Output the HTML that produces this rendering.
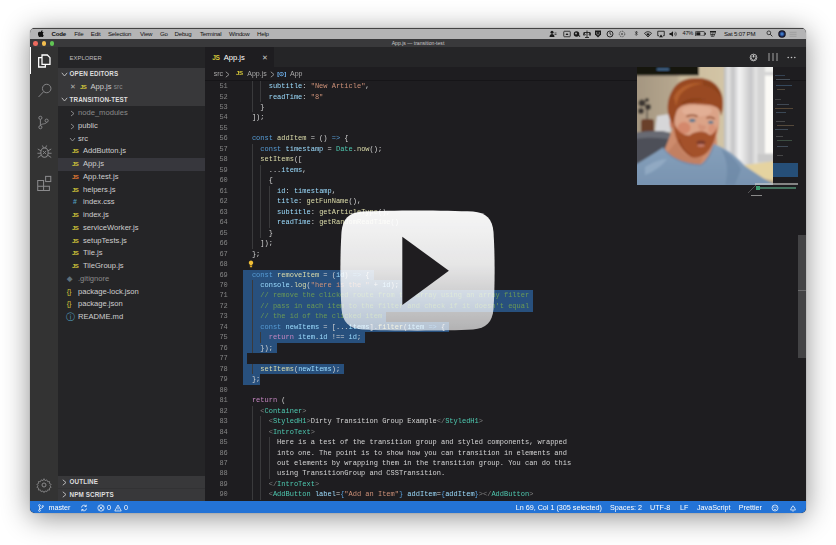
<!DOCTYPE html>
<html lang="en">
<head>
<meta charset="utf-8">
<title>App.js — transition-test</title>
<style>
html,body{margin:0;padding:0;}
body{width:836px;height:545px;background:#fff;overflow:hidden;position:relative;font-family:"Liberation Sans",sans-serif;}
#win{position:absolute;left:30px;top:28px;width:776px;height:485px;border-radius:5px;background:#1e1d20;
 box-shadow:0 4px 28px rgba(0,0,0,.46),0 0 1px rgba(0,0,0,.5);}
#clip{position:absolute;left:0;top:0;width:776px;height:485px;border-radius:5px;overflow:hidden;}
#clip div,#clip svg{position:absolute;}
#blur{left:0;top:0;width:776px;height:485px;filter:blur(0.4px);}
#menubar{left:0;top:0;width:776px;height:10.5px;background:#b4b4b5;border-top:0.7px solid #444;box-sizing:border-box;}
.mi{top:1.1px;font-size:6.1px;line-height:7.5px;color:#111;white-space:nowrap;letter-spacing:-0.2px;}
#titlebar{left:0;top:10.5px;width:776px;height:8.3px;background:#39393b;}
.tlb{width:4.6px;height:4.6px;border-radius:50%;top:2.5px;}
#ttl{left:338px;width:100px;text-align:center;top:1.6px;font-size:5.1px;line-height:6px;color:#c8c8c8;white-space:nowrap;}
#act{left:0;top:18.8px;width:28px;height:454.2px;background:#333333;}
#side{left:28px;top:18.8px;width:147px;height:454.2px;background:#252527;}
#status{left:0;top:473px;width:776px;height:12px;background:#2373d6;}
.st{top:3.1px;font-size:7.2px;line-height:8px;color:#fff;white-space:nowrap;}
#tabs{left:175px;top:18.8px;width:601px;height:20.7px;background:#252527;}
#tab{left:0.3px;top:0;width:68.7px;height:20.7px;background:#1e1d20;}
#crumbs{left:175px;top:39.5px;width:601px;height:13px;background:#1e1d20;border-bottom:0.8px solid #161518;box-sizing:border-box;}
.bc{top:3px;font-size:7px;line-height:8px;color:#a9a9a9;white-space:nowrap;}
.sh{left:28px;width:147px;height:12.6px;background:#38383a;}
.sht{font-size:6.3px;font-weight:bold;line-height:8px;color:#dedede;letter-spacing:0.1px;white-space:nowrap;}
.tl{font-size:7.6px;line-height:12.8px;white-space:nowrap;}
.ti{font-size:6px;font-weight:bold;line-height:12.8px;white-space:nowrap;letter-spacing:-0.55px;}
.trow-sel{left:28px;width:147px;height:12.8px;background:#37373d;}
.ln{left:174px;width:23.8px;text-align:right;font-family:"Liberation Mono",monospace;font-size:7px;line-height:10.47px;color:#858585;height:10.47px;}
.cl{left:213.5px;font-family:"Liberation Mono",monospace;font-size:7.01px;line-height:10.47px;height:10.47px;white-space:pre;color:#d4d4d4;}
.sel{left:213.2px;height:10.6px;background:#28507d;}
.ig{width:0.6px;height:10.47px;background:#3a3a3c;}
</style>
</head>
<body>
<div id="win"><div id="clip"><div id="blur">

<!-- macOS menu bar -->
<div id="menubar">
 <svg style="left:7.8px;top:1.2px" width="6" height="7" viewBox="0 0 12 14"><path d="M8.2 3.2c.6-.8 1-1.800.9-2.900-.9.100-1.900.600-2.600 1.400-.6.700-1.100 1.800-.9 2.800 1 .100 2-.500 2.600-1.300zM9.700 7.500c0-1.800 1.500-2.700 1.600-2.700-.9-1.300-2.200-1.400-2.700-1.500-1.100-.1-2.200.700-2.800.700-.6 0-1.500-.7-2.400-.600C2.100 3.400 1 4.100.4 5.200c-1.300 2.200-.3 5.500.9 7.300.6.900 1.300 1.900 2.300 1.800.9 0 1.300-.6 2.400-.6s1.400.6 2.400.6 1.600-.9 2.200-1.800c.7-1 1-2 1-2.100 0 0-1.900-.7-1.900-2.900z" fill="#111"/></svg>
 <div class="mi" style="left:21.5px;font-weight:bold">Code</div>
 <div class="mi" style="left:44.3px">File</div>
 <div class="mi" style="left:60.8px">Edit</div>
 <div class="mi" style="left:78px">Selection</div>
 <div class="mi" style="left:110px">View</div>
 <div class="mi" style="left:130px">Go</div>
 <div class="mi" style="left:144.5px">Debug</div>
 <div class="mi" style="left:170px">Terminal</div>
 <div class="mi" style="left:199px">Window</div>
 <div class="mi" style="left:227px">Help</div>
 <svg style="left:519.0px;top:0.5px" width="8" height="8" viewBox="0 0 16 16"><circle cx="6" cy="4.5" r="3" fill="#1a1a1a"/><path d="M1 14c0-4 2.500-6 5-6s5 2 5 6z" fill="#1a1a1a"/><path d="M11 6h4M11 9h4" stroke="#1a1a1a" stroke-width="1.3"/></svg>
 <svg style="left:532.5px;top:0.5px" width="8" height="8" viewBox="0 0 16 16"><rect x="1.500" y="2.500" width="13" height="11" rx="1.500" fill="none" stroke="#1a1a1a" stroke-width="1.600"/><path d="M5 10l3-4 3 4z" fill="#1a1a1a"/></svg>
 <svg style="left:542.5px;top:0.5px" width="8" height="8" viewBox="0 0 16 16"><circle cx="7" cy="8" r="5.500" fill="#1a1a1a"/><path d="M9 9l6 3-2 2z" fill="#1a1a1a"/><circle cx="6" cy="7" r="1.800" fill="#b4b4b5"/></svg>
 <svg style="left:552.5px;top:0.5px" width="8" height="8" viewBox="0 0 16 16"><path d="M8 1v14M2 5h12M2 5l-1.500 5h4zM14 5l-2 5h4zM4 15h8" fill="none" stroke="#1a1a1a" stroke-width="1.700"/></svg>
 <svg style="left:564.0px;top:0.5px" width="8" height="8" viewBox="0 0 16 16"><path d="M2 1h12v8l-6 6-6-6z" fill="#1a1a1a"/><path d="M5.500 4v4l2.500 2.500 2.500-2.500V4" fill="none" stroke="#b4b4b5" stroke-width="1.300"/></svg>
 <svg style="left:575.5px;top:0.5px" width="8" height="8" viewBox="0 0 16 16"><circle cx="8" cy="8" r="6" fill="none" stroke="#1a1a1a" stroke-width="1.800"/><path d="M8 4v4l3 2" fill="none" stroke="#1a1a1a" stroke-width="1.600"/></svg>
 <svg style="left:587.5px;top:0.5px" width="8" height="8" viewBox="0 0 16 16"><circle cx="8" cy="8" r="5.500" fill="none" stroke="#1a1a1a" stroke-width="1.400" stroke-dasharray="2 1.600"/><circle cx="8" cy="8" r="1.600" fill="#1a1a1a"/></svg>
 <svg style="left:603.2px;top:1.2px" width="6.5" height="6.5" viewBox="0 0 16 16"><path d="M5 4.500l6 6-3 3V2.500l3 3-6 6" fill="none" stroke="#1a1a1a" stroke-width="1.400"/></svg>
 <svg style="left:614.0px;top:0.5px" width="8" height="8" viewBox="0 0 16 16"><path d="M8 14L1 6.500C5 2.500 11 2.500 15 6.500z" fill="none" stroke="#1a1a1a" stroke-width="1.700"/><path d="M8 12L4.500 8c2-2 5-2 7 0z" fill="#1a1a1a"/></svg>
 <svg style="left:626.5px;top:0.5px" width="8" height="8" viewBox="0 0 16 16"><path d="M4 11.500H1.500v-9h13v9H12" fill="none" stroke="#1a1a1a" stroke-width="1.700"/><path d="M8 9l4 5.500H4z" fill="#1a1a1a"/></svg>
 <svg style="left:639.0px;top:0.5px" width="8" height="8" viewBox="0 0 16 16"><path d="M1 6h3l4-3.500v11L4 10H1z" fill="#1a1a1a"/><path d="M10.500 5.500c1.500 1.500 1.500 3.500 0 5M12.500 3.500c2.700 2.700 2.700 6.300 0 9" fill="none" stroke="#1a1a1a" stroke-width="1.300"/></svg>
 <div class="mi" style="left:652.5px;font-size:5.6px">47%</div>
 <svg style="left:664.5px;top:1.8px" width="11" height="5.500" viewBox="0 0 22 11"><rect x="0.800" y="0.800" width="18" height="9.400" rx="2" fill="none" stroke="#1a1a1a" stroke-width="1.500"/><rect x="2.600" y="2.600" width="8" height="5.800" fill="#1a1a1a"/><rect x="20" y="3.500" width="1.800" height="4" fill="#1a1a1a"/></svg>
 <svg style="left:679.0px;top:0.5px" width="8" height="8" viewBox="0 0 16 16"><rect x="2" y="2" width="12" height="3" fill="#1a1a1a"/><path d="M3 5l2 9M8 5l-1 9M13 5l-4 9M3 9h9" stroke="#1a1a1a" stroke-width="1.300" fill="none"/></svg>
 <div class="mi" style="left:694.0px;font-size:6.1px">Sat 5:07 PM</div>
 <svg style="left:735.5px;top:1.0px" width="7" height="7" viewBox="0 0 16 16"><circle cx="6.500" cy="6.500" r="4.300" fill="none" stroke="#1a1a1a" stroke-width="1.700"/><path d="M9.800 9.800L14.500 14.500" stroke="#1a1a1a" stroke-width="2"/></svg>
 <svg style="left:747.5px;top:0.5px" width="8" height="8" viewBox="0 0 16 16"><defs><radialGradient id="siri"><stop offset="0" stop-color="#4f9be0"/><stop offset="0.450" stop-color="#2a4f98"/><stop offset="0.800" stop-color="#15152a"/><stop offset="1" stop-color="#101018"/></radialGradient></defs><circle cx="8" cy="8" r="7.500" fill="url(#siri)"/></svg>
 <svg style="left:759.0px;top:0.5px" width="8" height="8" viewBox="0 0 16 16"><path d="M1 4.500h14M1 8.500h14M1 12.500h14" stroke="#8c8c8c" stroke-width="1.100"/></svg>
</div>

<!-- VS Code title bar -->
<div id="titlebar">
 <div class="tlb" style="left:3.2px;background:#ec6a5e"></div>
 <div class="tlb" style="left:11.5px;background:#f4bf4f"></div>
 <div class="tlb" style="left:19.7px;background:#61c554"></div>
 <div id="ttl">App.js — transition-test</div>
</div>

<!-- activity bar -->
<div id="act">
 <div style="left:0;top:0.700px;width:1.200px;height:27px;background:#fff"></div>
 <svg style="left:5.6px;top:6.4px" width="16" height="16" viewBox="0 0 24 24" fill="none" stroke="#ffffff" stroke-width="1.500"><path d="M9 3h8l4 4v10h-12z" stroke-width="1.900"/><path d="M9 7H4v14h10v-4" stroke-width="1.900"/></svg>
 <svg style="left:6.5px;top:36.2px" width="15" height="15" viewBox="0 0 24 24" fill="none" stroke="#8a8a8c" stroke-width="1.500"><circle cx="15.500" cy="8.800" r="6.800"/><path d="M10.800 13.600L2.500 22.300"/></svg>
 <svg style="left:5.8px;top:67.9px" width="15" height="15" viewBox="0 0 24 24" fill="none" stroke="#8a8a8c" stroke-width="1.500"><circle cx="7" cy="4.500" r="2.500"/><circle cx="7" cy="19.500" r="2.500"/><circle cx="17" cy="9" r="2.500"/><path d="M7 7v10M17 11.500c0 3.500-10 2-10 5.500"/></svg>
 <svg style="left:5.6px;top:96.3px" width="17" height="17" viewBox="0 0 24 24" fill="none" stroke="#8a8a8c" stroke-width="1.500"><ellipse cx="12" cy="13.500" rx="5.200" ry="6.600"/><path d="M9.700 11.200l4.600 4.600M14.300 11.200l-4.600 4.600M9 3.500l1.600 3.400M15 3.500l-1.600 3.400M2.500 8.500L7 11M2 14.500h4.800M2.500 20.500L7 17.500M21.500 8.500L17 11M22 14.500h-4.800M21.500 20.500L17 17.500" stroke-width="1.300"/></svg>
 <svg style="left:5.8px;top:128.2px" width="16.5" height="16.5" viewBox="0 0 24 24" fill="none" stroke="#8a8a8c" stroke-width="1.500"><path d="M2.500 8h8.500v8.500h8.500v6H2.500zM11 16.500H2.500M11 16.500v6"/><rect x="14" y="2" width="7.500" height="7.500"/></svg>
 <svg style="left:5.8px;top:430.4px" width="16" height="16" viewBox="0 0 24 24" fill="none" stroke="#8a8a8c" stroke-width="1.500"><circle cx="12" cy="12" r="3"/><path d="M12 2.500l1.500 3 2.700-1.200 1.200 2.800 3-.3-.3 3 2.700 1.200-2 2.200 2 2.200-2.700 1.200.3 3-3-.3-1.200 2.800-2.700-1.200-1.500 2.600-1.500-2.600-2.700 1.200-1.200-2.800-3 .3.300-3-2.700-1.200 2-2.200-2-2.200 2.700-1.200-.3-3 3 .3 1.200-2.800 2.700 1.200z" stroke-width="1.200"/></svg>
</div>

<!-- sidebar -->
<div id="side"></div>
<div class="sht" style="left:39.6px;top:25.8px;font-weight:normal;color:#bdbdbd;letter-spacing:0;font-size:5.9px">EXPLORER</div>
<div class="sh" style="top:39.6px;height:38.4px"></div>
<svg style="left:31.0px;top:43.8px" width="7" height="5" viewBox="0 0 7 5"><path d="M0.800 0.800L3.500 4 6.200 0.800" fill="none" stroke="#c5c5c5" stroke-width="0.900"/></svg>
<div class="sht" style="left:39.6px;top:42.0px">OPEN EDITORS</div>
<div class="tl" style="left:40.0px;top:53.2px;color:#b0b0b0;font-size:7px">&#x2715;</div>
<div class="ti" style="left:50.0px;top:53.2px;color:#d4c63a">JS</div>
<div class="tl" style="left:60.5px;top:53.2px;color:#cfcfcf">App.js <span style="color:#8c8c8c;font-size:6.5px">src</span></div>
<svg style="left:31.0px;top:69.3px" width="7" height="5" viewBox="0 0 7 5"><path d="M0.800 0.800L3.500 4 6.200 0.800" fill="none" stroke="#c5c5c5" stroke-width="0.900"/></svg>
<div class="sht" style="left:39.6px;top:67.6px">TRANSITION-TEST</div>
<svg class="chev" style="top:82.00px;left:40.00px" width="5" height="7" viewBox="0 0 5 7"><path d="M1 1 L4 3.5 L1 6" fill="none" stroke="#a0a0a0" stroke-width="0.8"/></svg>
<div class="tl" style="top:79.00px;left:48.00px;color:#8a8a8a">node_modules</div>
<svg class="chev" style="top:94.70px;left:40.00px" width="5" height="7" viewBox="0 0 5 7"><path d="M1 1 L4 3.5 L1 6" fill="none" stroke="#a0a0a0" stroke-width="0.8"/></svg>
<div class="tl" style="top:91.70px;left:48.00px;color:#cfcfcf">public</div>
<svg class="chev" style="top:108.50px;left:39.00px" width="7" height="5" viewBox="0 0 7 5"><path d="M1 1 L3.5 4 L6 1" fill="none" stroke="#a0a0a0" stroke-width="0.8"/></svg>
<div class="tl" style="top:104.50px;left:48.00px;color:#cfcfcf">src</div>
<div class="ti" style="top:117.20px;left:42.00px;color:#d4c63a;">JS</div>
<div class="tl" style="top:117.20px;left:53.00px;color:#cfcfcf">AddButton.js</div>
<div class="trow-sel" style="top:130.00px"></div>
<div class="ti" style="top:130.00px;left:42.00px;color:#d4c63a;">JS</div>
<div class="tl" style="top:130.00px;left:53.00px;color:#cfcfcf">App.js</div>
<div class="ti" style="top:142.70px;left:42.00px;color:#e37933;">JS</div>
<div class="tl" style="top:142.70px;left:53.00px;color:#cfcfcf">App.test.js</div>
<div class="ti" style="top:155.50px;left:42.00px;color:#d4c63a;">JS</div>
<div class="tl" style="top:155.50px;left:53.00px;color:#cfcfcf">helpers.js</div>
<div class="ti" style="top:168.30px;left:42.00px;color:#519aba;font-size:7px;margin-left:1px;">#</div>
<div class="tl" style="top:168.30px;left:53.00px;color:#cfcfcf">index.css</div>
<div class="ti" style="top:181.00px;left:42.00px;color:#d4c63a;">JS</div>
<div class="tl" style="top:181.00px;left:53.00px;color:#cfcfcf">index.js</div>
<div class="ti" style="top:193.80px;left:42.00px;color:#d4c63a;">JS</div>
<div class="tl" style="top:193.80px;left:53.00px;color:#cfcfcf">serviceWorker.js</div>
<div class="ti" style="top:206.50px;left:42.00px;color:#d4c63a;">JS</div>
<div class="tl" style="top:206.50px;left:53.00px;color:#cfcfcf">setupTests.js</div>
<div class="ti" style="top:219.30px;left:42.00px;color:#d4c63a;">JS</div>
<div class="tl" style="top:219.30px;left:53.00px;color:#cfcfcf">Tile.js</div>
<div class="ti" style="top:232.10px;left:42.00px;color:#d4c63a;">JS</div>
<div class="tl" style="top:232.10px;left:53.00px;color:#cfcfcf">TileGroup.js</div>
<div class="ti" style="top:244.80px;left:37.00px;color:#5d6f7a;font-size:7px;margin-left:0.3px;">&#x25C6;</div>
<div class="tl" style="top:244.80px;left:48.00px;color:#8a8a8a">.gitignore</div>
<div class="ti" style="top:257.60px;left:37.00px;color:#d4c63a;font-size:7.2px;font-weight:normal;margin-left:-0.3px;letter-spacing:0;">{}</div>
<div class="tl" style="top:257.60px;left:48.00px;color:#cfcfcf">package-lock.json</div>
<div class="ti" style="top:270.30px;left:37.00px;color:#d4c63a;font-size:7.2px;font-weight:normal;margin-left:-0.3px;letter-spacing:0;">{}</div>
<div class="tl" style="top:270.30px;left:48.00px;color:#cfcfcf">package.json</div>
<div class="ti" style="top:283.10px;left:37.00px;color:#519aba;font-size:8.5px;font-weight:normal;margin-left:-1.2px;">&#x24D8;</div>
<div class="tl" style="top:283.10px;left:48.00px;color:#cfcfcf">README.md</div>
<div class="sh" style="top:448px;height:25px"></div>
<svg style="left:32.0px;top:450.7px" width="5" height="7" viewBox="0 0 5 7"><path d="M0.800 0.800L4 3.500 0.800 6.200" fill="none" stroke="#c5c5c5" stroke-width="0.900"/></svg>
<div class="sht" style="left:39.6px;top:450.2px">OUTLINE</div>
<svg style="left:32.0px;top:463.4px" width="5" height="7" viewBox="0 0 5 7"><path d="M0.800 0.800L4 3.500 0.800 6.200" fill="none" stroke="#c5c5c5" stroke-width="0.900"/></svg>
<div class="sht" style="left:39.6px;top:462.9px">NPM SCRIPTS</div>
<div style="left:28px;top:460.300px;width:147px;height:0.600px;background:#323234"></div>

<!-- editor -->
<div id="tabs"><div id="tab"></div></div>
<div class="ti" style="left:182.3px;top:23.6px;color:#d4c63a;font-size:6.6px">JS</div>
<div class="tl" style="left:193.7px;top:23.6px;color:#ffffff">App.js</div>
<div class="tl" style="left:232.0px;top:23.6px;color:#c8c8c8;font-size:6.5px">&#x2715;</div>
<svg style="left:718.8px;top:24.5px" width="9" height="9" viewBox="0 0 16 16" fill="none" stroke="#c5c5c5" stroke-width="1.500"><circle cx="8" cy="8" r="6"/><path d="M8 3v5" stroke-width="2.400"/><path d="M5.500 5.500a4 4 0 1 0 5 0"/></svg>
<svg style="left:737.5px;top:25.0px" width="10" height="8" viewBox="0 0 10 8" stroke="#b0b0b0" stroke-width="0.900"><path d="M1 0v8M5 0v8M9 0v8"/></svg>
<svg style="left:756.5px;top:27.8px" width="9" height="3" viewBox="0 0 9 3" fill="#c5c5c5"><circle cx="1.200" cy="1.500" r="0.800"/><circle cx="4.500" cy="1.500" r="0.800"/><circle cx="7.800" cy="1.500" r="0.800"/></svg>
<div id="crumbs"></div>
<div class="bc" style="left:183.7px;top:41.8px">src</div>
<svg style="left:195.0px;top:42.5px" width="5" height="7" viewBox="0 0 5 7"><path d="M0.800 0.800L4 3.500 0.800 6.200" fill="none" stroke="#9a9a9a" stroke-width="0.900"/></svg>
<div class="ti" style="left:206.0px;top:39.4px;color:#d4c63a;font-size:6.2px">JS</div>
<div class="bc" style="left:217.3px;top:41.8px">App.js</div>
<svg style="left:240.0px;top:42.5px" width="5" height="7" viewBox="0 0 5 7"><path d="M0.800 0.800L4 3.500 0.800 6.200" fill="none" stroke="#9a9a9a" stroke-width="0.900"/></svg>
<div class="bc" style="left:247.3px;top:41.8px;color:#75beff;font-size:6px;font-weight:bold">[&#x2299;]</div>
<div class="bc" style="left:260.0px;top:41.8px">App</div>
<div class="sel" style="top:241.52px;width:130.41px"></div>
<div class="sel" style="top:252.00px;width:159.85px"></div>
<div class="sel" style="top:262.47px;width:290.26px"></div>
<div class="sel" style="top:272.94px;width:290.26px"></div>
<div class="sel" style="top:283.40px;width:143.03px"></div>
<div class="sel" style="top:293.88px;width:206.13px"></div>
<div class="sel" style="top:304.35px;width:121.99px"></div>
<div class="sel" style="top:314.81px;width:33.65px"></div>
<div class="sel" style="top:325.29px;width:4.21px"></div>
<div class="sel" style="top:335.75px;width:100.96px"></div>
<div class="sel" style="top:346.23px;width:16.83px"></div>
<div class="ig" style="top:53.06px;left:221.91px"></div>
<div class="ig" style="top:53.06px;left:230.33px"></div>
<div class="ig" style="top:63.53px;left:221.91px"></div>
<div class="ig" style="top:63.53px;left:230.33px"></div>
<div class="ig" style="top:74.00px;left:221.91px"></div>
<div class="ig" style="top:115.88px;left:221.91px"></div>
<div class="ig" style="top:126.36px;left:221.91px"></div>
<div class="ig" style="top:136.82px;left:221.91px"></div>
<div class="ig" style="top:136.82px;left:230.33px"></div>
<div class="ig" style="top:147.30px;left:221.91px"></div>
<div class="ig" style="top:147.30px;left:230.33px"></div>
<div class="ig" style="top:157.76px;left:221.91px"></div>
<div class="ig" style="top:157.76px;left:230.33px"></div>
<div class="ig" style="top:157.76px;left:238.74px"></div>
<div class="ig" style="top:168.24px;left:221.91px"></div>
<div class="ig" style="top:168.24px;left:230.33px"></div>
<div class="ig" style="top:168.24px;left:238.74px"></div>
<div class="ig" style="top:178.71px;left:221.91px"></div>
<div class="ig" style="top:178.71px;left:230.33px"></div>
<div class="ig" style="top:178.71px;left:238.74px"></div>
<div class="ig" style="top:189.18px;left:221.91px"></div>
<div class="ig" style="top:189.18px;left:230.33px"></div>
<div class="ig" style="top:189.18px;left:238.74px"></div>
<div class="ig" style="top:199.65px;left:221.91px"></div>
<div class="ig" style="top:199.65px;left:230.33px"></div>
<div class="ig" style="top:210.12px;left:221.91px"></div>
<div class="ig" style="top:252.00px;left:221.91px"></div>
<div class="ig" style="top:262.47px;left:221.91px"></div>
<div class="ig" style="top:272.94px;left:221.91px"></div>
<div class="ig" style="top:283.40px;left:221.91px"></div>
<div class="ig" style="top:293.88px;left:221.91px"></div>
<div class="ig" style="top:304.35px;left:221.91px"></div>
<div class="ig" style="top:304.35px;left:230.33px"></div>
<div class="ig" style="top:314.81px;left:221.91px"></div>
<div class="ig" style="top:335.75px;left:221.91px"></div>
<div class="ig" style="top:377.63px;left:221.91px"></div>
<div class="ig" style="top:388.11px;left:221.91px"></div>
<div class="ig" style="top:388.11px;left:230.33px"></div>
<div class="ig" style="top:398.58px;left:221.91px"></div>
<div class="ig" style="top:398.58px;left:230.33px"></div>
<div class="ig" style="top:409.05px;left:221.91px"></div>
<div class="ig" style="top:409.05px;left:230.33px"></div>
<div class="ig" style="top:409.05px;left:238.74px"></div>
<div class="ig" style="top:419.52px;left:221.91px"></div>
<div class="ig" style="top:419.52px;left:230.33px"></div>
<div class="ig" style="top:419.52px;left:238.74px"></div>
<div class="ig" style="top:429.99px;left:221.91px"></div>
<div class="ig" style="top:429.99px;left:230.33px"></div>
<div class="ig" style="top:429.99px;left:238.74px"></div>
<div class="ig" style="top:440.46px;left:221.91px"></div>
<div class="ig" style="top:440.46px;left:230.33px"></div>
<div class="ig" style="top:440.46px;left:238.74px"></div>
<div class="ig" style="top:450.93px;left:221.91px"></div>
<div class="ig" style="top:450.93px;left:230.33px"></div>
<div class="ig" style="top:461.40px;left:221.91px"></div>
<div class="ig" style="top:461.40px;left:230.33px"></div>
<div class="ln" style="top:53.06px">51</div>
<div class="cl" style="top:53.06px"><span style="color:#9cdcfe">      subtitle</span><span style="color:#d4d4d4">: </span><span style="color:#ce9178">"New Article"</span><span style="color:#d4d4d4">,</span></div>
<div class="ln" style="top:63.53px">52</div>
<div class="cl" style="top:63.53px"><span style="color:#9cdcfe">      readTime</span><span style="color:#d4d4d4">: </span><span style="color:#ce9178">"8"</span></div>
<div class="ln" style="top:74.00px">53</div>
<div class="cl" style="top:74.00px"><span style="color:#d4d4d4">    }</span></div>
<div class="ln" style="top:84.47px">54</div>
<div class="cl" style="top:84.47px"><span style="color:#d4d4d4">  ]);</span></div>
<div class="ln" style="top:94.94px">55</div>
<div class="ln" style="top:105.41px">56</div>
<div class="cl" style="top:105.41px"><span style="color:#569cd6">  const </span><span style="color:#dcdcaa">addItem</span><span style="color:#d4d4d4"> = () </span><span style="color:#569cd6">=&gt;</span><span style="color:#d4d4d4"> {</span></div>
<div class="ln" style="top:115.88px">57</div>
<div class="cl" style="top:115.88px"><span style="color:#569cd6">    const </span><span style="color:#9cdcfe">timestamp</span><span style="color:#d4d4d4"> = </span><span style="color:#4ec9b0">Date</span><span style="color:#d4d4d4">.</span><span style="color:#dcdcaa">now</span><span style="color:#d4d4d4">();</span></div>
<div class="ln" style="top:126.36px">58</div>
<div class="cl" style="top:126.36px"><span style="color:#dcdcaa">    setItems</span><span style="color:#d4d4d4">([</span></div>
<div class="ln" style="top:136.82px">59</div>
<div class="cl" style="top:136.82px"><span style="color:#d4d4d4">      ...</span><span style="color:#9cdcfe">items</span><span style="color:#d4d4d4">,</span></div>
<div class="ln" style="top:147.30px">60</div>
<div class="cl" style="top:147.30px"><span style="color:#d4d4d4">      {</span></div>
<div class="ln" style="top:157.76px">61</div>
<div class="cl" style="top:157.76px"><span style="color:#9cdcfe">        id</span><span style="color:#d4d4d4">: </span><span style="color:#9cdcfe">timestamp</span><span style="color:#d4d4d4">,</span></div>
<div class="ln" style="top:168.24px">62</div>
<div class="cl" style="top:168.24px"><span style="color:#9cdcfe">        title</span><span style="color:#d4d4d4">: </span><span style="color:#dcdcaa">getFunName</span><span style="color:#d4d4d4">(),</span></div>
<div class="ln" style="top:178.71px">63</div>
<div class="cl" style="top:178.71px"><span style="color:#9cdcfe">        subtitle</span><span style="color:#d4d4d4">: </span><span style="color:#dcdcaa">getArticleType</span><span style="color:#d4d4d4">(),</span></div>
<div class="ln" style="top:189.18px">64</div>
<div class="cl" style="top:189.18px"><span style="color:#9cdcfe">        readTime</span><span style="color:#d4d4d4">: </span><span style="color:#dcdcaa">getRandomReadTime</span><span style="color:#d4d4d4">()</span></div>
<div class="ln" style="top:199.65px">65</div>
<div class="cl" style="top:199.65px"><span style="color:#d4d4d4">      }</span></div>
<div class="ln" style="top:210.12px">66</div>
<div class="cl" style="top:210.12px"><span style="color:#d4d4d4">    ]);</span></div>
<div class="ln" style="top:220.59px">67</div>
<div class="cl" style="top:220.59px"><span style="color:#d4d4d4">  };</span></div>
<div class="ln" style="top:231.06px">68</div>
<div class="ln" style="top:241.52px">69</div>
<div class="cl" style="top:241.52px"><span style="color:#569cd6">  const </span><span style="color:#dcdcaa">removeItem</span><span style="color:#d4d4d4"> = (</span><span style="color:#9cdcfe">id</span><span style="color:#d4d4d4">) </span><span style="color:#569cd6">=&gt;</span><span style="color:#d4d4d4"> {</span></div>
<div class="ln" style="top:252.00px">70</div>
<div class="cl" style="top:252.00px"><span style="color:#9cdcfe">    console</span><span style="color:#d4d4d4">.</span><span style="color:#dcdcaa">log</span><span style="color:#d4d4d4">(</span><span style="color:#ce9178">"here is the "</span><span style="color:#d4d4d4"> + </span><span style="color:#9cdcfe">id</span><span style="color:#d4d4d4">);</span></div>
<div class="ln" style="top:262.47px">71</div>
<div class="cl" style="top:262.47px"><span style="color:#6a9955">    // remove the clicked route from the array using an array filter</span></div>
<div class="ln" style="top:272.94px">72</div>
<div class="cl" style="top:272.94px"><span style="color:#6a9955">    // pass in each item to the filter and check if it doesn't equal</span></div>
<div class="ln" style="top:283.40px">73</div>
<div class="cl" style="top:283.40px"><span style="color:#6a9955">    // the id of the clicked item</span></div>
<div class="ln" style="top:293.88px">74</div>
<div class="cl" style="top:293.88px"><span style="color:#569cd6">    const </span><span style="color:#9cdcfe">newItems</span><span style="color:#d4d4d4"> = [...</span><span style="color:#9cdcfe">items</span><span style="color:#d4d4d4">].</span><span style="color:#dcdcaa">filter</span><span style="color:#d4d4d4">(</span><span style="color:#9cdcfe">item</span><span style="color:#d4d4d4"> </span><span style="color:#569cd6">=&gt;</span><span style="color:#d4d4d4"> {</span></div>
<div class="ln" style="top:304.35px">75</div>
<div class="cl" style="top:304.35px"><span style="color:#c586c0">      return </span><span style="color:#9cdcfe">item</span><span style="color:#d4d4d4">.</span><span style="color:#9cdcfe">id</span><span style="color:#d4d4d4"> !== </span><span style="color:#9cdcfe">id</span><span style="color:#d4d4d4">;</span></div>
<div class="ln" style="top:314.81px">76</div>
<div class="cl" style="top:314.81px"><span style="color:#d4d4d4">    });</span></div>
<div class="ln" style="top:325.29px">77</div>
<div class="ln" style="top:335.75px">78</div>
<div class="cl" style="top:335.75px"><span style="color:#dcdcaa">    setItems</span><span style="color:#d4d4d4">(</span><span style="color:#9cdcfe">newItems</span><span style="color:#d4d4d4">);</span></div>
<div class="ln" style="top:346.23px">79</div>
<div class="cl" style="top:346.23px"><span style="color:#d4d4d4">  };</span></div>
<div class="ln" style="top:356.69px">80</div>
<div class="ln" style="top:367.17px">81</div>
<div class="cl" style="top:367.17px"><span style="color:#c586c0">  return </span><span style="color:#d4d4d4">(</span></div>
<div class="ln" style="top:377.63px">82</div>
<div class="cl" style="top:377.63px"><span style="color:#808080">    &lt;</span><span style="color:#4ec9b0">Container</span><span style="color:#808080">&gt;</span></div>
<div class="ln" style="top:388.11px">83</div>
<div class="cl" style="top:388.11px"><span style="color:#808080">      &lt;</span><span style="color:#4ec9b0">StyledH1</span><span style="color:#808080">&gt;</span><span style="color:#d4d4d4">Dirty Transition Group Example</span><span style="color:#808080">&lt;/</span><span style="color:#4ec9b0">StyledH1</span><span style="color:#808080">&gt;</span></div>
<div class="ln" style="top:398.58px">84</div>
<div class="cl" style="top:398.58px"><span style="color:#808080">      &lt;</span><span style="color:#4ec9b0">IntroText</span><span style="color:#808080">&gt;</span></div>
<div class="ln" style="top:409.05px">85</div>
<div class="cl" style="top:409.05px"><span style="color:#d4d4d4">        Here is a test of the transition group and styled components, wrapped</span></div>
<div class="ln" style="top:419.52px">86</div>
<div class="cl" style="top:419.52px"><span style="color:#d4d4d4">        into one. The point is to show how you can transition in elements and</span></div>
<div class="ln" style="top:429.99px">87</div>
<div class="cl" style="top:429.99px"><span style="color:#d4d4d4">        out elements by wrapping them in the transition group. You can do this</span></div>
<div class="ln" style="top:440.46px">88</div>
<div class="cl" style="top:440.46px"><span style="color:#d4d4d4">        using TransitionGroup and CSSTransition.</span></div>
<div class="ln" style="top:450.93px">89</div>
<div class="cl" style="top:450.93px"><span style="color:#808080">      &lt;/</span><span style="color:#4ec9b0">IntroText</span><span style="color:#808080">&gt;</span></div>
<div class="ln" style="top:461.40px">90</div>
<div class="cl" style="top:461.40px"><span style="color:#808080">      &lt;</span><span style="color:#4ec9b0">AddButton</span><span style="color:#d4d4d4"> </span><span style="color:#9cdcfe">label</span><span style="color:#d4d4d4">=</span><span style="color:#569cd6">{</span><span style="color:#ce9178">"Add an Item"</span><span style="color:#569cd6">}</span><span style="color:#d4d4d4"> </span><span style="color:#9cdcfe">addItem</span><span style="color:#d4d4d4">=</span><span style="color:#569cd6">{</span><span style="color:#9cdcfe">addItem</span><span style="color:#569cd6">}</span><span style="color:#808080">&gt;&lt;/</span><span style="color:#4ec9b0">AddButton</span><span style="color:#808080">&gt;</span></div>
<div style="left:743px;top:135px;width:24.500px;height:14px;background:#264f78"></div>
<div style="left:745.0px;top:47.0px;width:10px;height:0.900px;background:#5b7fa6;opacity:.38"></div>
<div style="left:746.0px;top:51.0px;width:14px;height:0.900px;background:#8aa0b8;opacity:.38"></div>
<div style="left:746.0px;top:57.0px;width:16px;height:0.900px;background:#5b8fc0;opacity:.38"></div>
<div style="left:747.0px;top:61.0px;width:8px;height:0.900px;background:#9b8a6a;opacity:.38"></div>
<div style="left:745.0px;top:71.0px;width:6px;height:0.900px;background:#777;opacity:.38"></div>
<div style="left:747.0px;top:76.0px;width:12px;height:0.900px;background:#7a8fa8;opacity:.38"></div>
<div style="left:745.0px;top:80.0px;width:18px;height:0.900px;background:#b08a5a;opacity:.38"></div>
<div style="left:746.0px;top:84.0px;width:10px;height:0.900px;background:#6c8fb0;opacity:.38"></div>
<div style="left:746.0px;top:93.0px;width:9px;height:0.900px;background:#888;opacity:.38"></div>
<div style="left:747.0px;top:97.0px;width:17px;height:0.900px;background:#b0906a;opacity:.38"></div>
<div style="left:745.0px;top:101.0px;width:13px;height:0.900px;background:#7a94b0;opacity:.38"></div>
<div style="left:746.0px;top:108.0px;width:7px;height:0.900px;background:#8a8a8a;opacity:.38"></div>
<div style="left:747.0px;top:112.0px;width:15px;height:0.900px;background:#6f9a7a;opacity:.38"></div>
<div style="left:747.0px;top:118.0px;width:11px;height:0.900px;background:#7a94b0;opacity:.38"></div>
<div style="left:747.0px;top:127.0px;width:6px;height:0.900px;background:#888;opacity:.38"></div>
<div style="left:767.600px;top:207px;width:8.400px;height:123px;background:#434345"></div>
<div style="left:767.600px;top:262.200px;width:8.400px;height:1px;background:#6a6a6c"></div>
<svg style="left:217.500px;top:231.500px" width="6" height="8" viewBox="0 0 12 16"><path d="M6 1a4.500 4.500 0 0 0-2.500 8.200V11h5V9.200A4.500 4.500 0 0 0 6 1z" fill="#f2c037"/><rect x="3.800" y="12" width="4.400" height="2.500" fill="#d9a520"/></svg>
<svg style="left:607px;top:39px" width="136" height="118" viewBox="0 0 136 118">
<defs>
 <filter id="bl" x="-5%" y="-5%" width="110%" height="110%"><feGaussianBlur stdDeviation="0.800"/></filter>
 <filter id="bl2" x="-10%" y="-10%" width="120%" height="120%"><feGaussianBlur stdDeviation="1.600"/></filter>
 <linearGradient id="wall" x1="0" x2="1" y1="0" y2="0"><stop offset="0" stop-color="#a39580"/><stop offset="0.450" stop-color="#b7a88f"/><stop offset="0.500" stop-color="#cbbc9d"/><stop offset="1" stop-color="#d3c5a6"/></linearGradient>
 <linearGradient id="curt" x1="0" x2="1" y1="0" y2="0"><stop offset="0" stop-color="#b9b9b9"/><stop offset="0.120" stop-color="#e4e4e4"/><stop offset="0.250" stop-color="#c2c2c4"/><stop offset="0.420" stop-color="#f4f4f4"/><stop offset="0.600" stop-color="#dcdcdc"/><stop offset="0.750" stop-color="#c6c6c8"/><stop offset="0.900" stop-color="#e6e6e6"/><stop offset="1" stop-color="#cfcfcf"/></linearGradient>
 <linearGradient id="shirt" x1="0" x2="0" y1="0" y2="1"><stop offset="0" stop-color="#86a0bb"/><stop offset="1" stop-color="#7893b0"/></linearGradient>
 <clipPath id="camclip"><rect x="0" y="0" width="136" height="118"/></clipPath>
</defs>
<g clip-path="url(#camclip)">
<rect x="0" y="0" width="136" height="118" fill="#b3a48c"/>
<g filter="url(#bl)">
 <rect x="-2" y="-2" width="92" height="104" fill="url(#wall)"/>
 <rect x="-2" y="-2" width="64" height="10.500" fill="#15120f"/>
 <rect x="20" y="1.500" width="12" height="1.600" fill="#4f7fb0"/>
 <rect x="87" y="-2" width="36" height="104" fill="url(#curt)"/>
 <rect x="120.500" y="-2" width="17" height="100" fill="#d4d4d4"/>
 <rect x="128" y="8.500" width="10" height="78" fill="#fbfaf6"/>
 <rect x="128" y="-2" width="10" height="7" fill="#f1f1ee"/>
 <rect x="120.500" y="87" width="17" height="8" fill="#c9c9c9"/>
 <path d="M100 99L138 94V114L118 110z" fill="#e5d3a0"/>
 <!-- plant -->
 <g fill="#3d3833"><circle cx="5" cy="36" r="3.500"/><circle cx="11" cy="40" r="3"/><circle cx="4" cy="44" r="3"/><circle cx="10" cy="33" r="2"/><rect x="9.600" y="40" width="1" height="14"/></g>
 <rect x="4" y="52" width="13" height="14" rx="3" fill="#6b4129"/>
 <path d="M20 49l12-2 2 18H18z" fill="#d6d6d8"/>
 <!-- couch -->
 <path d="M-2 66C10 64 26 63 32 66C38 70 40 76 40 84V104H-2z" fill="#4e5059"/>
 <path d="M-2 66C10 64 26 63 32 66C36 68 38 71 39 74C28 70 10 70 -2 72z" fill="#686a73"/>
 <!-- neck (behind shirt) -->
 <path d="M37 58L31 74L27 84L44 102H68L80 78V58z" fill="#cd8c6d"/>
 <path d="M40 74C44 88 54 93 66 90L62 100H44L30 86z" fill="#b97759" opacity="0.550"/>
 <!-- shirt -->
 <path d="M-2 98C8 92 18 86 26 80.500C32 90 46 98 64 98C70 94 74 88 77 77L84 80C94 85 102 92 108 99L126 111L140 120H-2z" fill="url(#shirt)"/>
 <path d="M84 82C94 87 100 94 104 102L98 118H88C92 104 90 92 84 82z" fill="#6c87a5" opacity="0.700"/>
 <path d="M8 100C16 95 24 92 30 92C26 98 18 104 8 108z" fill="#9db4cb" opacity="0.600"/>
 <path d="M26 80.500C32 90 46 98 64 98C70 94 74 88 77 77" fill="none" stroke="#6d88a6" stroke-width="1.200"/>
 <!-- ears / face -->
 <ellipse cx="35.500" cy="56" rx="2.800" ry="5.500" fill="#c47a5e"/>
 <path d="M37 46C37 38 44 34 58 34C70 34 80 36 82 44C83 54 82 64 79 72C75 84 66 90 57 90C47 88 41 78 39 66C38 58 37 52 37 46z" fill="#dba387"/>
 <ellipse cx="47" cy="61" rx="6.500" ry="6" fill="#d27f63" opacity="0.750"/>
 <ellipse cx="75" cy="62" rx="4" ry="5" fill="#d58a6e" opacity="0.600"/>
 <ellipse cx="60" cy="44" rx="15" ry="5.500" fill="#e3b298" opacity="0.850"/>
 <!-- hair -->
 <path d="M33.500 53C29 45 30 32 35 24C40 14 50 10.500 60 11C72 10.500 82 17 85 28C87 36 86 44 84 49C83.500 45 82 42 80 40.500C74 37 66 38 58 37C50 36.500 44 38 40.500 42.500C38.500 46 37.500 52 36.500 58z" fill="#994921"/>
 <path d="M37 30C41 20 53 14 67 16.500C59 17 49 20 43 28C41 32 39.500 36 39 40z" fill="#b6632f" opacity="0.850"/>
 <path d="M66 13.500C76 14 84 22 85 32C82 26 76 20 66 18z" fill="#87401c" opacity="0.700"/>
 <path d="M44 36C50 31 60 30 70 33C62 33 52 34 46 38z" fill="#7d3a1a" opacity="0.500"/>
 <!-- beard -->
 <path d="M36.500 55C37 68 41 82 54 90C64 93 74 85 78 72L81.500 56C80 63 77 67.500 72.500 68C70 65.500 67 64.500 64 64.500C60 64.500 56 65.500 52.500 68.500C46 68.500 40 64 36.500 55z" fill="#a4512a"/>
 <path d="M43 72C45 81 51 87 58 89.500C51 89 45 83 41 73z" fill="#8c4122" opacity="0.700"/>
 <ellipse cx="64" cy="75.500" rx="4.500" ry="2" fill="#7a3a2a"/>
 <ellipse cx="64" cy="78.500" rx="3.500" ry="1.200" fill="#c98070"/>
 <path d="M61 57C61 61 62 63.500 65 64C68 63.500 69 61.500 69 59" fill="#d39378"/>
 <!-- eyes -->
 <ellipse cx="55.300" cy="53.500" rx="3.200" ry="1.700" fill="#56788f"/>
 <ellipse cx="73.800" cy="55.300" rx="2.800" ry="1.500" fill="#56788f"/>
 <path d="M49.500 49.500c3-1.800 8-1.800 11 0M69.500 51c3-1.200 6-.700 8.500 1" stroke="#8a4424" stroke-width="1.500" fill="none"/>
</g>
</g>
</svg>
<div style="left:725px;top:154.800px;width:43px;height:2.400px;background:#c9ccca;opacity:.6"></div>
<div style="left:729.500px;top:159px;width:36px;height:2.400px;background:#5fae8a;opacity:.6"></div>
<div style="left:726px;top:158.200px;width:3.500px;height:4px;background:#3d9a70"></div>
<div style="left:721px;top:166.800px;width:11px;height:0.800px;background:#8a8a8a"></div>
<svg style="left:717px;top:156px" width="10" height="10" viewBox="0 0 10 10"><path d="M1 9L9 1" stroke="#777" stroke-width="0.600"/></svg>

<!-- status bar -->
<div id="status">
<svg style="left:7.8px;top:2.900px" width="6" height="8" viewBox="0 0 12 16" fill="none" stroke="#fff" stroke-width="1.400"><circle cx="3" cy="3" r="1.800"/><circle cx="3" cy="13" r="1.800"/><circle cx="9.500" cy="4.500" r="1.500"/><path d="M3 5v6M9.500 6c0 3.500-6.500 2-6.500 5"/></svg>
<div class="st" style="left:18.5px">master</div>
<svg style="left:50.0px;top:3px" width="8" height="8" viewBox="0 0 16 16" fill="none" stroke="#fff" stroke-width="1.500"><path d="M3 7a5 5 0 0 1 9-2.500M13 9a5 5 0 0 1-9 2.500"/><path d="M12.500 1.500v3.500H9M3.500 14.500V11H7"/></svg>
<svg style="left:67.0px;top:3px" width="8" height="8" viewBox="0 0 16 16" fill="none" stroke="#fff" stroke-width="1.400"><circle cx="8" cy="8" r="6.300"/><path d="M4.500 4.500l7 7M11.500 4.500l-7 7"/></svg>
<div class="st" style="left:77.0px">0</div>
<svg style="left:83.5px;top:3px" width="8" height="8" viewBox="0 0 16 16" fill="none" stroke="#fff" stroke-width="1.400"><path d="M8 2L14.500 14H1.500z"/><path d="M8 6.500v4M8 11.500v1.200"/></svg>
<div class="st" style="left:94.0px">0</div>
<div class="st" style="left:485.7px">Ln 69, Col 1 (305 selected)</div>
<div class="st" style="left:580.0px">Spaces: 2</div>
<div class="st" style="left:620.0px">UTF-8</div>
<div class="st" style="left:650.0px">LF</div>
<div class="st" style="left:667.0px">JavaScript</div>
<div class="st" style="left:708.8px">Prettier</div>
<svg style="left:741.4px;top:3px" width="8" height="8" viewBox="0 0 16 16" fill="none" stroke="#fff" stroke-width="1.400"><circle cx="8" cy="8" r="6"/><path d="M5 9.500c1.500 2.500 4.500 2.500 6 0"/><circle cx="5.800" cy="6.200" r="0.600"/><circle cx="10.200" cy="6.200" r="0.600"/></svg>
<svg style="left:759.0px;top:3px" width="8" height="8" viewBox="0 0 16 16" fill="none" stroke="#fff" stroke-width="1.400"><path d="M3 12c1.500-1.500 1-7 5-7s3.500 5.500 5 7z"/><path d="M6.500 14h3M8 3v2"/></svg>
</div>

</div></div></div>
<svg style="position:absolute;left:340px;top:210px" width="155" height="121" viewBox="0 0 155 121">
<defs><linearGradient id="pg" x1="0" x2="0" y1="0" y2="1"><stop offset="0" stop-color="#ffffff" stop-opacity="0.960"/><stop offset="0.450" stop-color="#ffffff" stop-opacity="0.890"/><stop offset="1" stop-color="#ffffff" stop-opacity="0.660"/></linearGradient></defs>
<path d="M22 1.500C50 0 105 0 133 1.500C146 2.500 152.500 9 153.500 22C155 45 155 76 153.500 99C152.500 112 146 118.500 133 119.500C105 121 50 121 22 119.500C9 118.500 2.500 112 1.500 99C0 76 0 45 1.500 22C2.500 9 9 2.500 22 1.500Z" fill="url(#pg)"/>
<path d="M62.300 26.700V95L108.900 60.700Z" fill="#1f1d20"/>
</svg>
</body>
</html>
